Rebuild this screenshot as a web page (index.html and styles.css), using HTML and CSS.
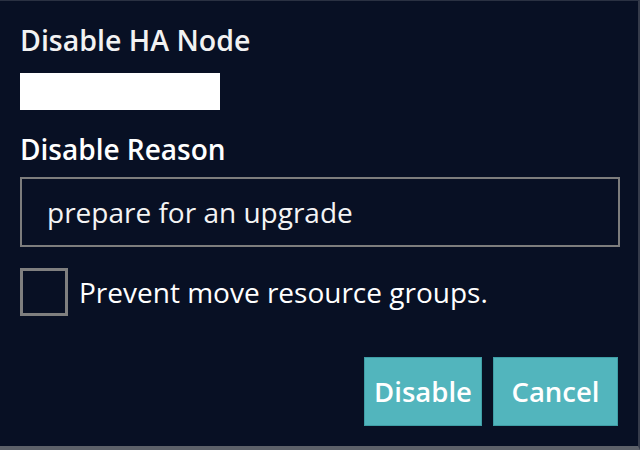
FILE: index.html
```html
<!DOCTYPE html>
<html lang="en">
<head>
  <meta charset="UTF-8" />
  <title>Disable HA Node</title>
  <link rel="stylesheet" href="styles.css">
</head>
<body>
  <div class="dialog">
    <h2 class="title">Disable HA Node</h2>
    <div class="node-name"></div>

    <label class="field-label" for="reason">Disable Reason</label>
    <input class="reason" type="text" id="reason" value="prepare for an upgrade" />

    <label class="check-row">
      <span class="check-box"></span>
      <span class="check-text">Prevent move resource groups.</span>
    </label>

    <div class="actions">
      <button class="btn btn-disable" type="button">Disable</button>
      <button class="btn btn-cancel" type="button">Cancel</button>
    </div>
  </div>
</body>
</html>
```

FILE: styles.css
```css
html, body {
  margin: 0;
  padding: 0;
  background: #081024;
}

.dialog {
  box-sizing: border-box;
  width: 640px;
  height: 450px;
  background: #081024;
  border-top: 1px solid #2a3142;
  border-right: 2px solid #353b4a;
  border-bottom: 4px solid #5d6169;
  padding: 21px 20px 0 20px;
  font-family: "Open Sans", "Noto Sans", sans-serif;
  color: #fff;
  display: flex;
  flex-direction: column;
}

.title {
  margin: 0;
  font-size: 28.5px;
  font-weight: 600;
  line-height: 36px;
  color: #f2f2f2;
}

.node-name {
  width: 200px;
  height: 37px;
  background: #fff;
  margin-top: 15px;
}

.field-label {
  display: block;
  margin-top: 21px;
  font-size: 28px;
  font-weight: 600;
  line-height: 36px;
}

.reason {
  box-sizing: border-box;
  width: 600px;
  height: 70px;
  margin-top: 10px;
  padding: 0 25px;
  background: transparent;
  border: 2px solid #7d7d7d;
  border-radius: 0;
  color: #f4f4f4;
  font-family: inherit;
  font-size: 28px;
  outline: none;
}

.check-row {
  display: flex;
  align-items: center;
  gap: 11px;
  margin-top: 21px;
}

.check-box {
  box-sizing: border-box;
  width: 48px;
  height: 48px;
  border: 3px solid #7f7f7f;
}

.check-text {
  font-size: 28px;
  line-height: 36px;
}

.actions {
  display: flex;
  justify-content: flex-end;
  gap: 11px;
  margin-top: 41px;
}

.btn {
  height: 69px;
  border: 1px solid #3f9ea6;
  background: #52b5bd;
  color: #fff;
  font-family: inherit;
  font-size: 27.5px;
  font-weight: 600;
  padding: 0;
  cursor: pointer;
}

.btn-disable {
  width: 118px;
}

.btn-cancel {
  width: 125px;
}
```
